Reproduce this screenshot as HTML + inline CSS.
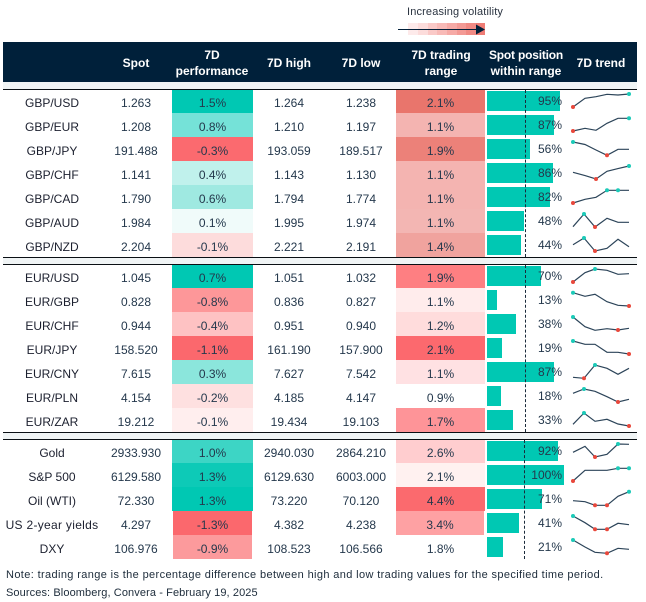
<!DOCTYPE html>
<html><head><meta charset="utf-8"><title>FX table</title>
<style>
html,body{margin:0;padding:0;background:#fff}
body{position:relative;width:646px;height:602px;overflow:hidden;font:12px "Liberation Sans",sans-serif;color:#24384c}
div{position:absolute;box-sizing:border-box}
.r{left:0;width:646px;height:24px}
.c{top:2px;height:24px;line-height:24px;text-align:center;white-space:nowrap}
.l{left:2px;width:100px;color:#1b1f2e}
.s{left:96px;width:80px}
.p{left:172px;width:81px;top:0;line-height:28px}
.h{left:249px;width:80px}
.w{left:321px;width:80px}
.g{left:396px;width:89px;top:0;line-height:28px}
.b{left:487px;top:2px;height:20px;background:#00c8b3}
.t{left:512px;width:50px;top:2px;height:20px;line-height:20px;text-align:right;white-space:nowrap;z-index:3}
.hd{color:#fff;font-weight:bold;text-align:center;white-space:nowrap;line-height:16px;width:100px}
.k{left:3px;width:634px;height:1px;background:#0a0f14;z-index:2}
.band{left:3px;width:634px;background:#f0f4f5}
.d{width:0;border-left:1px dashed #1a2a3a;z-index:2}
.n{left:6px;white-space:nowrap;font-size:11px;color:#1c2b3a;line-height:16px}
svg{position:absolute;left:0;top:0;z-index:4}
</style></head><body>

<div style="left:407px;top:5px;font-size:11px;line-height:14px;white-space:nowrap;color:#2a3340;letter-spacing:.15px">Increasing volatility</div>
<div style="left:408px;top:23px;width:10px;height:12px;background:#fdeaea"></div>
<div style="left:418px;top:23px;width:10px;height:12px;background:#fcdcdb"></div>
<div style="left:428px;top:23px;width:10px;height:12px;background:#fac9c7"></div>
<div style="left:437px;top:23px;width:10px;height:12px;background:#f8bab7"></div>
<div style="left:447px;top:23px;width:10px;height:12px;background:#f6aaa6"></div>
<div style="left:457px;top:23px;width:10px;height:12px;background:#f39a95"></div>
<div style="left:466px;top:23px;width:10px;height:12px;background:#f08a84"></div>
<div style="left:476px;top:23px;width:9px;height:12px;background:#ee7c75"></div>

<div style="left:3px;top:42px;width:634px;height:40px;background:#00203a"></div>
<div class="hd" style="left:86px;top:55px">Spot</div>
<div class="hd" style="left:162px;top:47px">7D<br>performance</div>
<div class="hd" style="left:239px;top:55px">7D high</div>
<div class="hd" style="left:311px;top:55px">7D low</div>
<div class="hd" style="left:391px;top:47px">7D trading<br>range</div>
<div class="hd" style="left:476px;top:47px"><span style="letter-spacing:-.2px">Spot position</span><br>within range</div>
<div class="hd" style="left:551px;top:55px">7D trend</div>

<div class="band" style="top:82px;height:7px"></div>
<div class="k" style="top:89px"></div>
<div class="band" style="top:258px;height:6px"></div>
<div class="k" style="top:257px"></div>
<div class="k" style="top:264px"></div>
<div class="band" style="top:433px;height:6px"></div>
<div class="k" style="top:432px"></div>
<div class="k" style="top:439px"></div>

<div class="r" style="top:89px"><div class="c l">GBP/USD</div><div class="c s">1.263</div><div class="c p" style="background:#00c8b3">1.5%</div><div class="c h">1.264</div><div class="c w">1.238</div><div class="c g" style="background:#e9756c">2.1%</div><div class="b" style="width:73px"></div><div class="t">95%</div></div>
<div class="r" style="top:113px"><div class="c l">GBP/EUR</div><div class="c s">1.208</div><div class="c p" style="background:#75e2d8">0.8%</div><div class="c h">1.210</div><div class="c w">1.197</div><div class="c g" style="background:#f4b4b1">1.1%</div><div class="b" style="width:67px"></div><div class="t">87%</div></div>
<div class="r" style="top:137px"><div class="c l">GBP/JPY</div><div class="c s">191.488</div><div class="c p" style="background:#fb6a6f">-0.3%</div><div class="c h">193.059</div><div class="c w">189.517</div><div class="c g" style="background:#ec8179">1.9%</div><div class="b" style="width:43px"></div><div class="t">56%</div></div>
<div class="r" style="top:161px"><div class="c l">GBP/CHF</div><div class="c s">1.141</div><div class="c p" style="background:#c0f1ec">0.4%</div><div class="c h">1.143</div><div class="c w">1.130</div><div class="c g" style="background:#f4b4b1">1.1%</div><div class="b" style="width:66px"></div><div class="t">86%</div></div>
<div class="r" style="top:185px"><div class="c l">GBP/CAD</div><div class="c s">1.790</div><div class="c p" style="background:#9fe9e1">0.6%</div><div class="c h">1.794</div><div class="c w">1.774</div><div class="c g" style="background:#f4b4b1">1.1%</div><div class="b" style="width:63px"></div><div class="t">82%</div></div>
<div class="r" style="top:209px"><div class="c l">GBP/AUD</div><div class="c s">1.984</div><div class="c p" style="background:#f0fbfa">0.1%</div><div class="c h">1.995</div><div class="c w">1.974</div><div class="c g" style="background:#f3b6b3">1.1%</div><div class="b" style="width:37px"></div><div class="t">48%</div></div>
<div class="r" style="top:233px"><div class="c l">GBP/NZD</div><div class="c s">2.204</div><div class="c p" style="background:#fddcdc">-0.1%</div><div class="c h">2.221</div><div class="c w">2.191</div><div class="c g" style="background:#f0a39e">1.4%</div><div class="b" style="width:34px"></div><div class="t">44%</div></div>

<div class="r" style="top:264px"><div class="c l">EUR/USD</div><div class="c s">1.045</div><div class="c p" style="background:#00c8b3">0.7%</div><div class="c h">1.051</div><div class="c w">1.032</div><div class="c g" style="background:#fe7f82">1.9%</div><div class="b" style="width:54px"></div><div class="t">70%</div></div>
<div class="r" style="top:288px"><div class="c l">EUR/GBP</div><div class="c s">0.828</div><div class="c p" style="background:#fd9799">-0.8%</div><div class="c h">0.836</div><div class="c w">0.827</div><div class="c g" style="background:#ffecec">1.1%</div><div class="b" style="width:10px"></div><div class="t">13%</div></div>
<div class="r" style="top:312px"><div class="c l">EUR/CHF</div><div class="c s">0.944</div><div class="c p" style="background:#fec2c3">-0.4%</div><div class="c h">0.951</div><div class="c w">0.940</div><div class="c g" style="background:#ffdcdc">1.2%</div><div class="b" style="width:29px"></div><div class="t">38%</div></div>
<div class="r" style="top:336px"><div class="c l">EUR/JPY</div><div class="c s">158.520</div><div class="c p" style="background:#fb686d">-1.1%</div><div class="c h">161.190</div><div class="c w">157.900</div><div class="c g" style="background:#fc696e">2.1%</div><div class="b" style="width:15px"></div><div class="t">19%</div></div>
<div class="r" style="top:360px"><div class="c l">EUR/CNY</div><div class="c s">7.615</div><div class="c p" style="background:#8be6dc">0.3%</div><div class="c h">7.627</div><div class="c w">7.542</div><div class="c g" style="background:#ffe1e3">1.1%</div><div class="b" style="width:67px"></div><div class="t">87%</div></div>
<div class="r" style="top:384px"><div class="c l">EUR/PLN</div><div class="c s">4.154</div><div class="c p" style="background:#fee0e0">-0.2%</div><div class="c h">4.185</div><div class="c w">4.147</div><div class="c g">0.9%</div><div class="b" style="width:14px"></div><div class="t">18%</div></div>
<div class="r" style="top:408px"><div class="c l">EUR/ZAR</div><div class="c s">19.212</div><div class="c p" style="background:#ffeeee">-0.1%</div><div class="c h">19.434</div><div class="c w">19.103</div><div class="c g" style="background:#fe9498">1.7%</div><div class="b" style="width:26px"></div><div class="t">33%</div></div>

<div class="r" style="top:439px"><div class="c l">Gold</div><div class="c s">2933.930</div><div class="c p" style="background:#3dd5c5">1.0%</div><div class="c h">2940.030</div><div class="c w">2864.210</div><div class="c g" style="background:#ffcdcf">2.6%</div><div class="b" style="width:71px"></div><div class="t">92%</div></div>
<div class="r" style="top:463px"><div class="c l">S&amp;P 500</div><div class="c s">6129.580</div><div class="c p" style="background:#0dcab7">1.3%</div><div class="c h">6129.630</div><div class="c w">6003.000</div><div class="c g" style="background:#fff1f0">2.1%</div><div class="b" style="width:77px"></div><div class="t">100%</div></div>
<div class="r" style="top:487px"><div class="c l">Oil (WTI)</div><div class="c s">72.330</div><div class="c p" style="background:#00c8b3">1.3%</div><div class="c h">73.220</div><div class="c w">70.120</div><div class="c g" style="background:#fb6a6e">4.4%</div><div class="b" style="width:55px"></div><div class="t">71%</div></div>
<div class="r" style="top:511px"><div class="c l" style="letter-spacing:.3px">US 2-year yields</div><div class="c s">4.297</div><div class="c p" style="background:#fb686d;left:173px;width:79px">-1.3%</div><div class="c h">4.382</div><div class="c w">4.238</div><div class="c g" style="background:#fea1a3;width:88px">3.4%</div><div class="b" style="width:32px"></div><div class="t">41%</div></div>
<div class="r" style="top:535px"><div class="c l">DXY</div><div class="c s">106.976</div><div class="c p" style="background:#fc9a9c;left:173px;width:79px">-0.9%</div><div class="c h">108.523</div><div class="c w">106.566</div><div class="c g">1.8%</div><div class="b" style="width:16px"></div><div class="t">21%</div></div>

<div class="d" style="left:525px;top:90px;height:167px"></div>
<div class="d" style="left:525px;top:265px;height:167px"></div>
<div class="d" style="left:524px;top:440px;height:119px"></div>

<svg width="646" height="602" viewBox="0 0 646 602">
<g fill="none" stroke="#2c4459" stroke-width="1.2">
<polyline points="573,107 585,98.3 596,96.7 607,94.3 618,95 629,94"/>
<polyline points="573,131 585,128.3 596,130.3 607,123.3 618,118.3 629,118.3"/>
<polyline points="573,142 585,144.5 596,150 607,155.3 618,149.3 629,149.3"/>
<polyline points="573,172.3 585,175.6 596,179 607,171.3 618,168.6 629,166"/>
<polyline points="573,203 585,199.3 596,197.3 607,190.3 618,190.3 629,190.3"/>
<polyline points="573,226.7 584,214 595,227 607,218.3 618,222.3 629,222.3"/>
<polyline points="573,244.7 584,238 595,251 607,248.3 618,239.3 629,246.7"/>
<polyline points="573,282 585,272.7 595,269 607,270.3 618,274.3 629,273.7"/>
<polyline points="573,292.7 585,296.3 595,294.3 607,301.7 618,305.3 629,306"/>
<polyline points="573,317 585,326.7 595,330.3 607,328.7 618,330 629,328.3"/>
<polyline points="573,341 585,344.3 595,344.3 607,352.3 618,352.3 629,354"/>
<polyline points="573,377.3 584,378.3 595,365 607,368.3 618,374.3 629,368.3"/>
<polyline points="573,393.3 584,389 595,391.3 607,396.7 618,402 629,399.3"/>
<polyline points="573,424.3 584,413 595,421.3 607,419.3 618,424 629,426"/>
<polyline points="573,452.3 585,446.3 595,457 607,454.3 618,444 629,444.3"/>
<polyline points="573,481 585,470.3 595,470.3 607,470.3 618,468.3 629,468.3"/>
<polyline points="573,500.7 585,501.7 595,505.3 607,505.3 618,496.3 629,491.7"/>
<polyline points="573,516 585,522.7 595,529.3 607,529.3 618,523.3 629,524.7"/>
<polyline points="573,540 585,547 595,552.3 607,553.3 618,548.3 629,549.3"/>
</g>
<g fill="#e8483c">
<circle cx="573" cy="107" r="2"/><circle cx="573" cy="131" r="2"/><circle cx="607" cy="155.3" r="2"/><circle cx="596" cy="179" r="2"/><circle cx="573" cy="203" r="2"/><circle cx="595" cy="227" r="2"/><circle cx="595" cy="251" r="2"/>
<circle cx="573" cy="282" r="2"/><circle cx="629" cy="306" r="2"/><circle cx="618" cy="330" r="2"/><circle cx="629" cy="354" r="2"/><circle cx="584" cy="378.3" r="2"/><circle cx="618" cy="402" r="2"/><circle cx="629" cy="426" r="2"/>
<circle cx="595" cy="457" r="2"/><circle cx="573" cy="481" r="2"/><circle cx="595" cy="505.3" r="2"/><circle cx="607" cy="505.3" r="2"/><circle cx="595" cy="529.3" r="2"/><circle cx="607" cy="529.3" r="2"/><circle cx="607" cy="553.3" r="2"/>
</g>
<g fill="#1ccab8">
<circle cx="629" cy="94" r="2"/><circle cx="629" cy="118.3" r="2"/><circle cx="573" cy="142" r="2"/><circle cx="629" cy="166" r="2"/><circle cx="607" cy="190.3" r="2"/><circle cx="618" cy="190.3" r="2"/><circle cx="584" cy="214" r="2"/><circle cx="584" cy="238" r="2"/>
<circle cx="595" cy="269" r="2"/><circle cx="573" cy="292.7" r="2"/><circle cx="573" cy="317" r="2"/><circle cx="573" cy="341" r="2"/><circle cx="595" cy="365" r="2"/><circle cx="584" cy="389" r="2"/><circle cx="584" cy="413" r="2"/>
<circle cx="618" cy="444" r="2"/><circle cx="618" cy="468.3" r="2"/><circle cx="629" cy="468.3" r="2"/><circle cx="629" cy="491.7" r="2"/><circle cx="573" cy="516" r="2"/><circle cx="573" cy="540" r="2"/>
</g>
<line x1="398" y1="29.5" x2="478" y2="29.5" stroke="#00203a" stroke-width="1"/>
<polygon points="476,24.5 485,29.5 476,34.5" fill="#00203a"/>
</svg>

<div class="n" style="top:567px;letter-spacing:.37px">Note: trading range is the percentage difference between high and low trading values for the specified time period.</div>
<div class="n" style="top:585px;letter-spacing:.1px">Sources: Bloomberg, Convera - February 19, 2025</div>
</body></html>
